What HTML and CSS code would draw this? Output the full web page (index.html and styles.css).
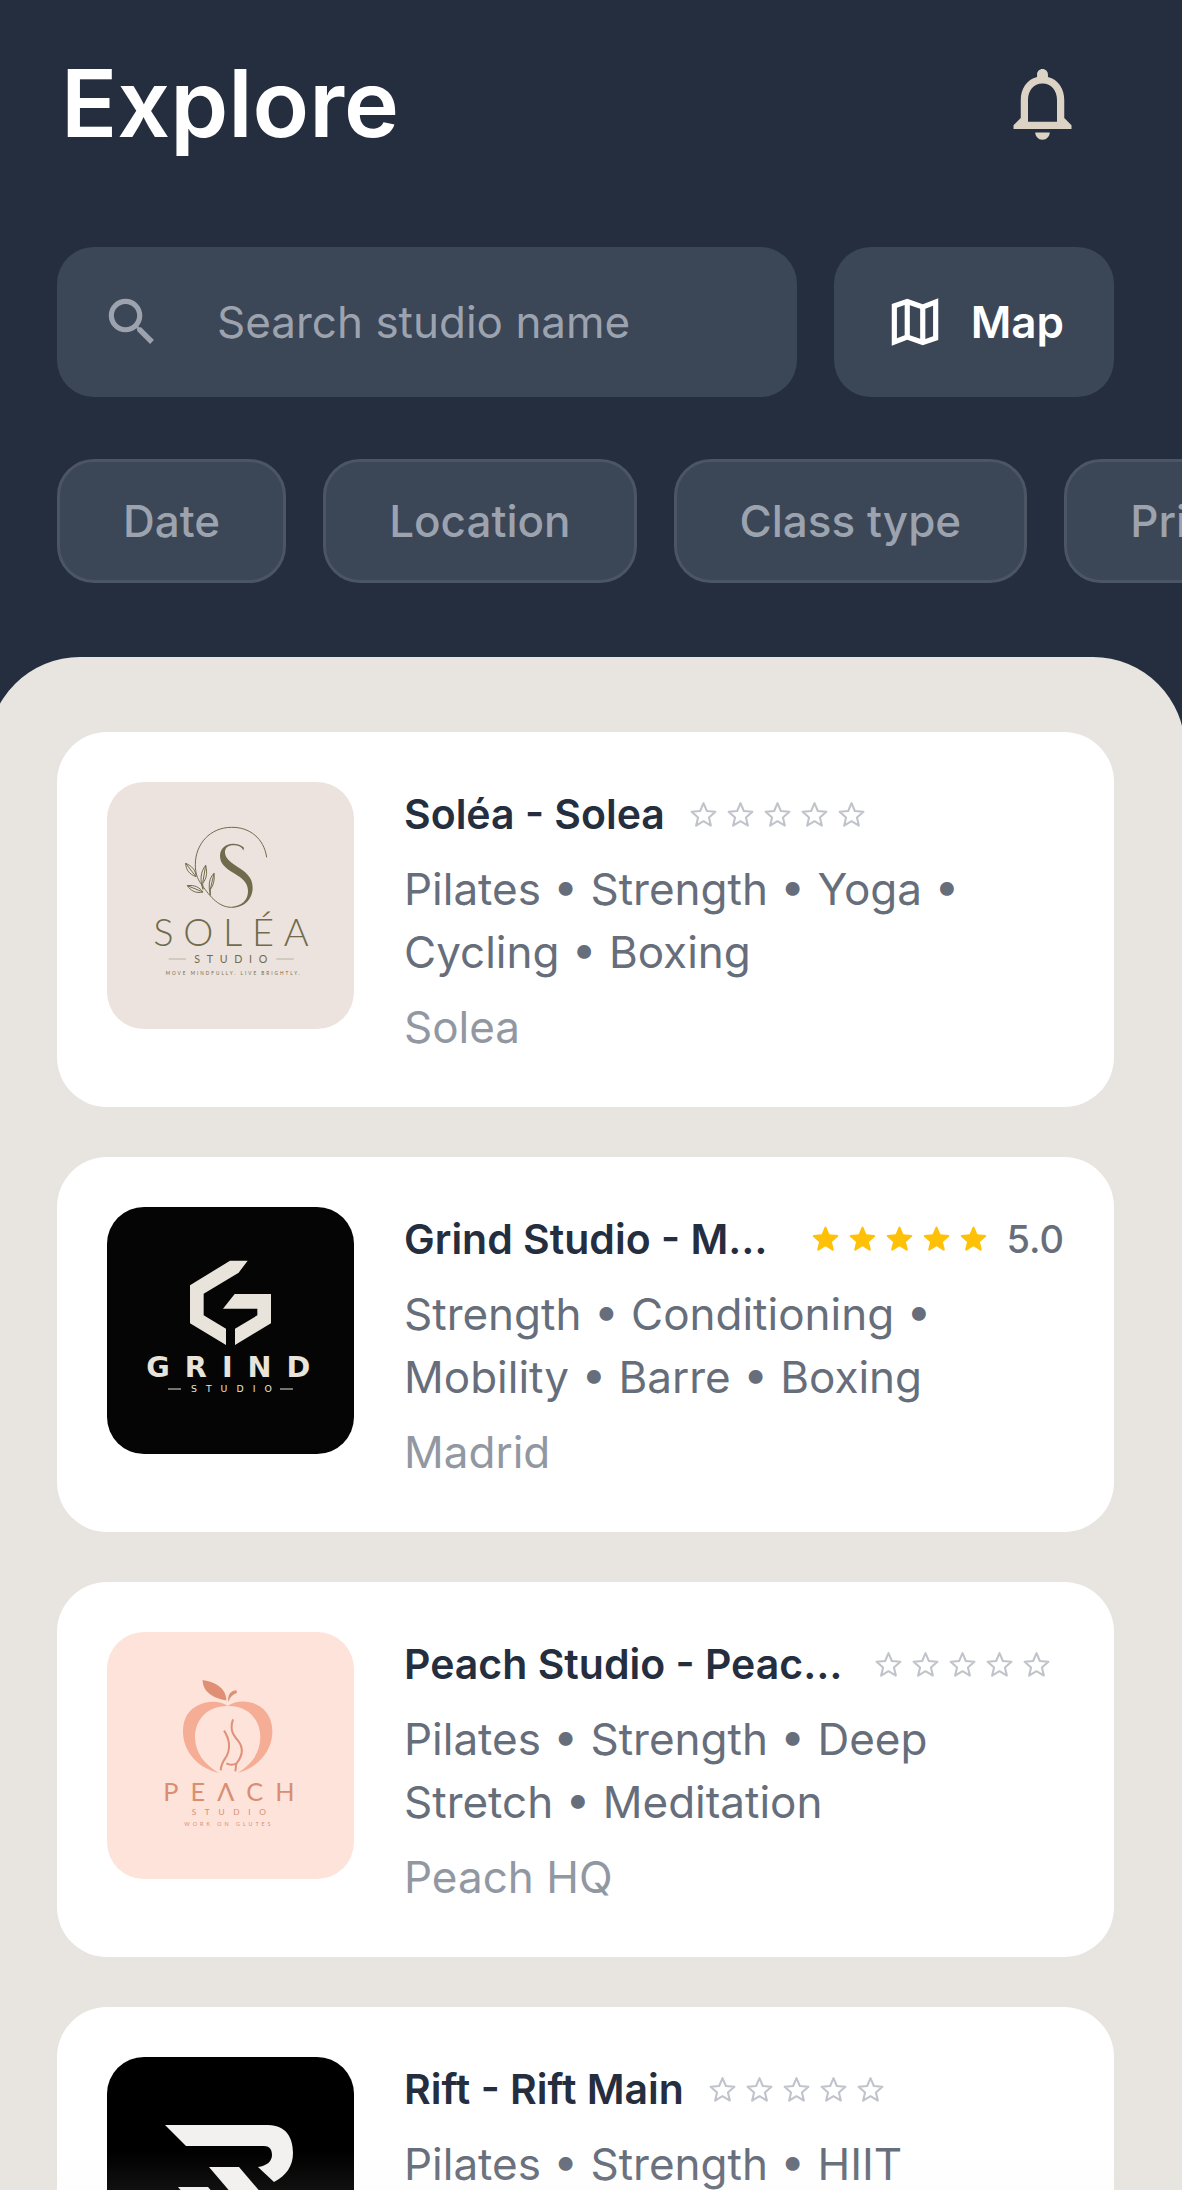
FILE: index.html
```html
<!DOCTYPE html>
<html lang="en">
<head>
  <meta charset="UTF-8">
  <meta name="viewport" content="width=device-width, initial-scale=1.0">
  <title>Explore</title>
  <link rel="stylesheet" href="styles.css">
</head>
<body>
  <!-- shared star icons -->
  <svg class="sprite" aria-hidden="true">
    <symbol id="star" viewBox="0 0 24 24">
      <path d="M12 17.3l-5.2 3.2c-.7.4-1.4-.1-1.2-.9L7 13.9l-4.600-4c-.6-.5-.3-1.300.5-1.400l6.100-.5 2.300-5.500c.3-.7 1.100-.7 1.400 0L15 8l6.100.5c.8.1 1.100.9.5 1.400l-4.600 4 1.400 5.700c.2.8-.5 1.300-1.200.9z"/>
    </symbol>
    <symbol id="star-empty" viewBox="0 0 24 24">
      <path fill="none" stroke="currentColor" stroke-width="1.6" stroke-linejoin="round" d="M12 3.200l2.600 6.100 6.600.6-5 4.400 1.500 6.300-5.700-3.400-5.700 3.400 1.500-6.300-5-4.400 6.600-.6z"/>
    </symbol>
  </svg>

  <div class="app">
    <header class="header">
      <div class="title-row">
        <h1>Explore</h1>
        <button class="bell" type="button" aria-label="Notifications">
          <svg viewBox="0 0 24 24"><path d="M12 22c1.100 0 2-.9 2-2h-4c0 1.100.9 2 2 2zm6-6v-5c0-3.070-1.630-5.640-4.500-6.320V4c0-.83-.67-1.500-1.500-1.500s-1.500.67-1.500 1.500v.68C7.640 5.360 6 7.920 6 11v5l-2 2v1h16v-1l-2-2zm-2 1H8v-6c0-2.480 1.510-4.500 4-4.500s4 2.020 4 4.500v6z"/></svg>
        </button>
      </div>

      <div class="search-row">
        <label class="search">
          <svg viewBox="0 0 24 24" aria-hidden="true"><path d="M15.500 14h-.79l-.28-.27C15.410 12.590 16 11.110 16 9.500 16 5.910 13.090 3 9.500 3S3 5.910 3 9.500 5.910 16 9.500 16c1.610 0 3.090-.59 4.230-1.570l.27.28v.79l5 4.990L20.490 19l-4.990-5zm-6 0C7.010 14 5 11.990 5 9.500S7.010 5 9.500 5 14 7.010 14 9.500 11.990 14 9.500 14z"/></svg>
          <input type="text" placeholder="Search studio name" aria-label="Search studio name">
        </label>
        <button class="map-button" type="button">
          <svg viewBox="0 0 24 24" aria-hidden="true"><path d="M15 5.100L9 3 3 5.020v16.200l6-2.330 6 2.100 6-2.020V2.770L15 5.100zm-5 .37l4 1.400v11.660l-4-1.400V5.470zm-5 .99l3-1.010v11.700l-3 1.160V6.460zm14 11.080l-3 1.010V6.860l3-1.160v11.840z"/></svg>
          Map
        </button>
      </div>

      <div class="filters">
        <button class="chip" type="button">Date</button>
        <button class="chip" type="button">Location</button>
        <button class="chip" type="button">Class type</button>
        <button class="chip" type="button">Price</button>
      </div>
    </header>

    <main class="panel">
      <a class="card" href="#solea">
        <svg class="logo logo-solea" viewBox="21 36 741 741" role="img" aria-label="Soléa Studio">
          <path class="line" d="M500 262C492 205 448 171 395 172C330 172 286 222 286 284C286 310 292 325 302 340C325 372 352 412 395 412"/>
          <path d="M395 413C435 413 458 385 458 353C458 322 438 306 412 290C388 275 375 262 375 247C375 233 385 226 400 226C416 226 426 231 430 242L432 233C424 225 412 221 399 221C376 221 360 236 360 258C360 282 378 295 402 310C428 326 444 338 444 364C444 391 424 409 395 410Z"/>
          <g class="leaf">
            <path d="M288 320C266 312 258 298 257 280C275 288 288 300 288 320ZM288 320L257 280"/>
            <path d="M309 358C299 330 302 304 317 286C323 312 319 325 308 340ZM308 340L317 286"/>
            <path d="M331 376C324 344 328 324 342 310C344 330 341 345 331 358ZM331 358L342 310"/>
            <path d="M309 366C287 371 272 362 262 347C284 344 298 352 309 366ZM309 366L262 347"/>
          </g>
          <text class="name" x="160" y="529">SOLÉA</text>
          <text class="sub" x="283" y="578">STUDIO</text>
          <path class="rule" d="M206 567H258M529 567H581"/>
          <text class="tag" x="197" y="615">MOVE MINDFULLY. LIVE BRIGHTLY.</text>
        </svg>
        <div class="info">
          <div class="info-head">
            <h2>Soléa - Solea</h2>
            <div class="stars" role="img" aria-label="No ratings yet">
              <svg><use href="#star-empty"/></svg><svg><use href="#star-empty"/></svg><svg><use href="#star-empty"/></svg><svg><use href="#star-empty"/></svg><svg><use href="#star-empty"/></svg>
            </div>
          </div>
          <p class="classes">Pilates • Strength • Yoga • Cycling • Boxing</p>
          <p class="place">Solea</p>
        </div>
      </a>

      <a class="card" href="#grind">
        <svg class="logo logo-grind" viewBox="21 37 741 741" role="img" aria-label="Grind Studio">
          <path d="M390 198H443L416 234L311 297V362L378 402V451L270 386V272Z"/>
          <path d="M404 298H513V386L405 451V402L472 362V342H369Z"/>
          <text class="name" x="139" y="546">GRIND</text>
          <text class="sub" x="273" y="593">STUDIO</text>
          <path class="rule" d="M204 583H243M540 583H579"/>
        </svg>
        <div class="info">
          <div class="info-head">
            <h2>Grind Studio - Madrid</h2>
            <div class="stars rated" role="img" aria-label="5 out of 5 stars">
              <svg><use href="#star"/></svg><svg><use href="#star"/></svg><svg><use href="#star"/></svg><svg><use href="#star"/></svg><svg><use href="#star"/></svg>
            </div>
            <span class="score">5.0</span>
          </div>
          <p class="classes">Strength • Conditioning • Mobility • Barre • Boxing</p>
          <p class="place">Madrid</p>
        </div>
      </a>

      <a class="card" href="#peach">
        <svg class="logo logo-peach" viewBox="21 38 741 741" role="img" aria-label="Peach Studio">
          <path class="dark" d="M308 182C345 188 378 205 379 243C340 237 308 218 308 182Z"/>
          <path class="dark" d="M385 248C382 228 392 213 409 213L411 221C398 224 390 235 385 248Z"/>
          <path class="fruit" d="M383 260C355 241 315 245 285 263C258 280 248 308 249 342C252 405 302 449 357 461C314 436 286 402 285 354C285 300 325 258 383 260Z"/>
          <path class="fruit" d="M383 260C410 242 450 242 481 262C508 280 518 310 517 342C514 402 466 449 412 461C454 436 480 402 481 354C481 300 443 258 383 260Z"/>
          <path class="body" d="M399 300C388 333 400 347 414 364C433 388 426 412 409 433C397 438 387 436 379 432M409 433L406 456"/>
          <path class="body" d="M372 334C390 360 391 389 380 410C371 424 363 433 362 453"/>
          <text class="name" x="190" y="546">PEΛCH</text>
          <text class="sub" x="275" y="587">STUDIO</text>
          <text class="tag" x="253" y="621">WORK ON GLUTES</text>
        </svg>
        <div class="info">
          <div class="info-head">
            <h2>Peach Studio - Peach HQ</h2>
            <div class="stars" role="img" aria-label="No ratings yet">
              <svg><use href="#star-empty"/></svg><svg><use href="#star-empty"/></svg><svg><use href="#star-empty"/></svg><svg><use href="#star-empty"/></svg><svg><use href="#star-empty"/></svg>
            </div>
          </div>
          <p class="classes">Pilates • Strength • Deep Stretch • Meditation</p>
          <p class="place">Peach HQ</p>
        </div>
      </a>

      <a class="card" href="#rift">
        <svg class="logo logo-rift" viewBox="0 0 247 247" role="img" aria-label="Rift">
          <path d="M58 68H161C180 68 186 82 186 96C186 109 179 119 167 125L151 110C160 109 165 104 165 98C165 92 162 89 157 89H79Z"/>
          <path d="M102 110H132L190 178H160Z"/>
          <path d="M71 130H101L142 178H112Z"/>
        </svg>
        <div class="info">
          <div class="info-head">
            <h2>Rift - Rift Main</h2>
            <div class="stars" role="img" aria-label="No ratings yet">
              <svg><use href="#star-empty"/></svg><svg><use href="#star-empty"/></svg><svg><use href="#star-empty"/></svg><svg><use href="#star-empty"/></svg><svg><use href="#star-empty"/></svg>
            </div>
          </div>
          <p class="classes">Pilates • Strength • HIIT</p>
          <p class="place">Rift Main</p>
        </div>
      </a>
    </main>
  </div>
</body>
</html>
```

FILE: styles.css
```css
* {
  box-sizing: border-box;
}

body {
  margin: 0;
  background-color: #252e3f;
  font-family: Inter, "Liberation Sans", sans-serif;
  font-size: 44px;
  font-optical-sizing: none;
}

h1, h2, p {
  margin: 0;
}

button, input {
  font: inherit;
  border: 0;
  padding: 0;
}

button {
  cursor: pointer;
}

svg {
  display: block;
  flex-shrink: 0;
  fill: currentColor;
}

.sprite {
  display: none;
}

.app {
  height: 100vh;
  display: flex;
  flex-direction: column;
  overflow: hidden;
}

/* header */
.header {
  flex-shrink: 0;
  padding: 46px 68px 74px 57px;
}

.title-row {
  display: flex;
  justify-content: space-between;
  align-items: center;
  margin-bottom: 87px;
  padding: 0 28px 0 4px;
}

h1 {
  font-size: 93px;
  line-height: 114px;
  font-weight: 600;
  color: #fff;
}

.bell {
  background: none;
  color: #ddd3c5;
}

.bell svg {
  width: 87px;
  height: 87px;
}

.search-row {
  display: flex;
  gap: 37px;
  margin-bottom: 62px;
}

.search,
.map-button {
  height: 150px;
  display: flex;
  align-items: center;
  border-radius: 37px;
  background-color: #3b4656;
}

.search {
  flex: 1;
  min-width: 0;
  gap: 54px;
  padding: 0 44px;
  color: #9ca3af;
}

.search svg,
.map-button svg {
  width: 62px;
  height: 62px;
}

.search input {
  flex: 1;
  min-width: 0;
  background: none;
  color: #fff;
  outline: none;
}

.search input::placeholder {
  color: #9ca3af;
  opacity: 1;
}

.map-button {
  gap: 25px;
  padding: 0 50px;
  color: #fff;
  font-weight: 600;
}

.filters {
  display: flex;
  gap: 37px;
  margin-right: -68px;
  overflow: hidden;
}

.chip {
  flex-shrink: 0;
  height: 124px;
  padding: 0 63px;
  border: 3px solid #4b5563;
  border-radius: 37px;
  background-color: #3b4656;
  color: #9ca3af;
  font-weight: 500;
}

/* studio list */
.panel {
  position: relative;
  flex: 1;
  min-height: 0;
  display: flex;
  flex-direction: column;
  gap: 50px;
  margin: 0 -3px 0 -12px;
  padding: 75px 71px 0 69px;
  border-radius: 92px 92px 0 0;
  background-color: #e8e5e0;
  overflow: hidden;
}

/* soft fade over the end of the list */
.panel::after {
  content: "";
  position: absolute;
  inset: auto 0 0;
  height: 40px;
  background: linear-gradient(rgba(232, 229, 224, 0), rgba(232, 229, 224, 0.07));
  pointer-events: none;
}

.card {
  flex-shrink: 0;
  display: flex;
  align-items: flex-start;
  gap: 50px;
  padding: 50px 50px 48px;
  border-radius: 50px;
  background-color: #fff;
  color: #252e3f;
  text-decoration: none;
}

.info {
  flex: 1;
  min-width: 0;
}

.info-head {
  display: flex;
  align-items: center;
  margin-bottom: 12px;
}

h2 {
  min-width: 0;
  margin-right: 23px;
  font-size: 41px;
  line-height: 64px;
  font-weight: 600;
  white-space: nowrap;
  overflow: hidden;
  text-overflow: ellipsis;
}

.stars {
  display: flex;
  flex-shrink: 0;
  gap: 6px;
  padding-right: 12px;
  color: #c0c4ca;
}

.stars svg {
  width: 31px;
  height: 31px;
}

.stars.rated {
  color: #ffc107;
}

.score {
  margin-left: 5px;
  font-size: 38px;
  line-height: 64px;
  font-weight: 500;
  color: #676e7b;
}

.classes {
  margin-bottom: 12px;
  line-height: 63px;
  color: #676e7b;
}

.place {
  line-height: 63px;
  color: #9298a2;
}

/* logos */
.logo {
  width: 247px;
  height: 247px;
  border-radius: 37px;
}

.logo-solea {
  background-color: #ece3de;
  color: #716b4d;
}

.logo-solea .line,
.logo-solea .leaf {
  fill: none;
  stroke: currentColor;
  stroke-width: 3;
}

.logo-solea .rule {
  stroke: #b9b2a0;
  stroke-width: 3;
}

.logo-solea .name {
  font: 300 114px Lato, sans-serif;
  letter-spacing: 29px;
}

.logo-solea .sub {
  font: 400 32px Lato, sans-serif;
  letter-spacing: 20px;
}

.logo-solea .tag {
  font: 400 14px Lato, sans-serif;
  letter-spacing: 6px;
}

.logo-grind {
  background-color: #050505;
  color: #e8e4db;
}

.logo-grind .name {
  font: 700 86px "DejaVu Sans", sans-serif;
  letter-spacing: 45px;
}

.logo-grind .sub {
  font: 400 28px "DejaVu Sans", sans-serif;
  letter-spacing: 27px;
}

.logo-grind .rule {
  stroke: currentColor;
  stroke-width: 3;
}

.logo-peach {
  background-color: #fde3da;
  color: #d98e73;
}

.logo-peach .dark {
  fill: #df8f73;
}

.logo-peach .fruit {
  fill: #f5ad96;
}

.logo-peach .body {
  fill: none;
  stroke: #df9078;
  stroke-width: 6;
}

.logo-peach .name {
  font: 400 76px Lato, sans-serif;
  letter-spacing: 36px;
}

.logo-peach .sub {
  font: 400 25px Lato, sans-serif;
  letter-spacing: 26px;
}

.logo-peach .tag {
  font: 400 16px Lato, sans-serif;
  letter-spacing: 9px;
}

.logo-rift {
  background-color: #000;
  color: #f3f1ef;
}
```
